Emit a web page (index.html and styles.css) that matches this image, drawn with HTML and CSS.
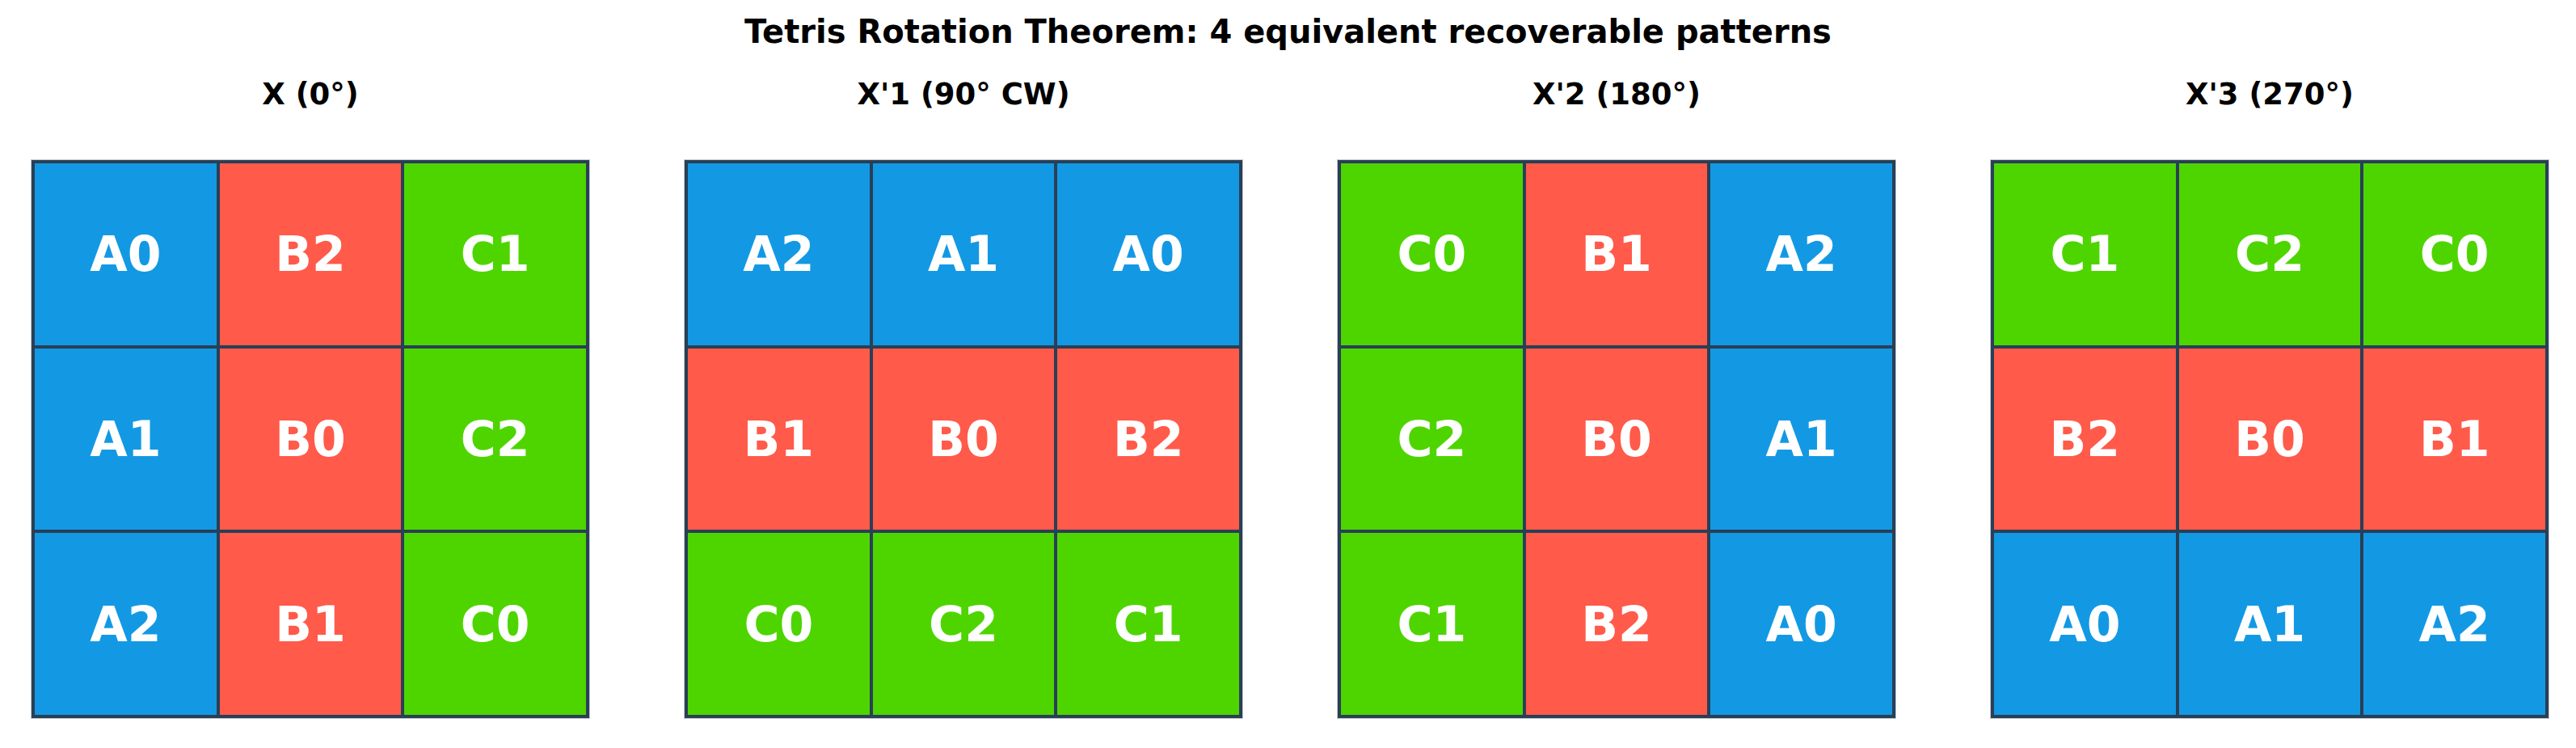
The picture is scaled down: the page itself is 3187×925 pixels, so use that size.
FILE: index.html
```html
<!DOCTYPE html>
<html lang="en">
<head>
<meta charset="utf-8">
<title>Tetris Rotation Theorem</title>
<link rel="stylesheet" href="styles.css">
</head>
<body>
<main class="figure">
  <h1 class="suptitle">Tetris Rotation Theorem: 4 equivalent recoverable patterns</h1>
  <div class="panels">
    <section class="panel">
      <h2 class="panel-title">X (0°)</h2>
      <div class="grid">
        <div class="cell a">A0</div><div class="cell b">B2</div><div class="cell c">C1</div>
        <div class="cell a">A1</div><div class="cell b">B0</div><div class="cell c">C2</div>
        <div class="cell a">A2</div><div class="cell b">B1</div><div class="cell c">C0</div>
      </div>
    </section>
    <section class="panel">
      <h2 class="panel-title">X'1 (90° CW)</h2>
      <div class="grid">
        <div class="cell a">A2</div><div class="cell a">A1</div><div class="cell a">A0</div>
        <div class="cell b">B1</div><div class="cell b">B0</div><div class="cell b">B2</div>
        <div class="cell c">C0</div><div class="cell c">C2</div><div class="cell c">C1</div>
      </div>
    </section>
    <section class="panel">
      <h2 class="panel-title">X'2 (180°)</h2>
      <div class="grid">
        <div class="cell c">C0</div><div class="cell b">B1</div><div class="cell a">A2</div>
        <div class="cell c">C2</div><div class="cell b">B0</div><div class="cell a">A1</div>
        <div class="cell c">C1</div><div class="cell b">B2</div><div class="cell a">A0</div>
      </div>
    </section>
    <section class="panel">
      <h2 class="panel-title">X'3 (270°)</h2>
      <div class="grid">
        <div class="cell c">C1</div><div class="cell c">C2</div><div class="cell c">C0</div>
        <div class="cell b">B2</div><div class="cell b">B0</div><div class="cell b">B1</div>
        <div class="cell a">A0</div><div class="cell a">A1</div><div class="cell a">A2</div>
      </div>
    </section>
  </div>
</main>
</body>
</html>
```

FILE: styles.css
```css
html, body {
  margin: 0;
  padding: 0;
  background: #ffffff;
}

body {
  width: 3187px;
  height: 925px;
  overflow: hidden;
  font-family: "DejaVu Sans", "Liberation Sans", sans-serif;
  font-weight: bold;
  color: #000000;
}

.figure {
  display: flex;
  flex-direction: column;
}

.suptitle {
  margin: 0;
  padding-top: 15px;
  font-size: 40px;
  line-height: 48px;
  font-weight: bold;
  text-align: center;
}

.panels {
  display: flex;
  gap: 118px;
  padding-left: 39px;
  margin-top: 32px;
}

.panel {
  width: 690px;
  display: flex;
  flex-direction: column;
  align-items: center;
}

.panel-title {
  margin: 0;
  font-size: 37px;
  line-height: 44px;
  font-weight: bold;
  text-align: center;
}

.grid {
  margin-top: 59px;
  width: 690px;
  height: 690px;
  box-sizing: border-box;
  display: grid;
  grid-template-columns: repeat(3, 1fr);
  grid-template-rows: repeat(3, 1fr);
  gap: 4px;
  padding: 4px;
  background: #293f56;
  box-shadow: 0 0 0 1px rgba(120, 135, 150, 0.45);
}

.cell {
  display: flex;
  align-items: center;
  justify-content: center;
  color: #ffffff;
  font-size: 60px;
  font-weight: bold;
}

.cell.a { background: #1399e4; }
.cell.b { background: #ff5a4a; }
.cell.c { background: #4ed500; }
```
